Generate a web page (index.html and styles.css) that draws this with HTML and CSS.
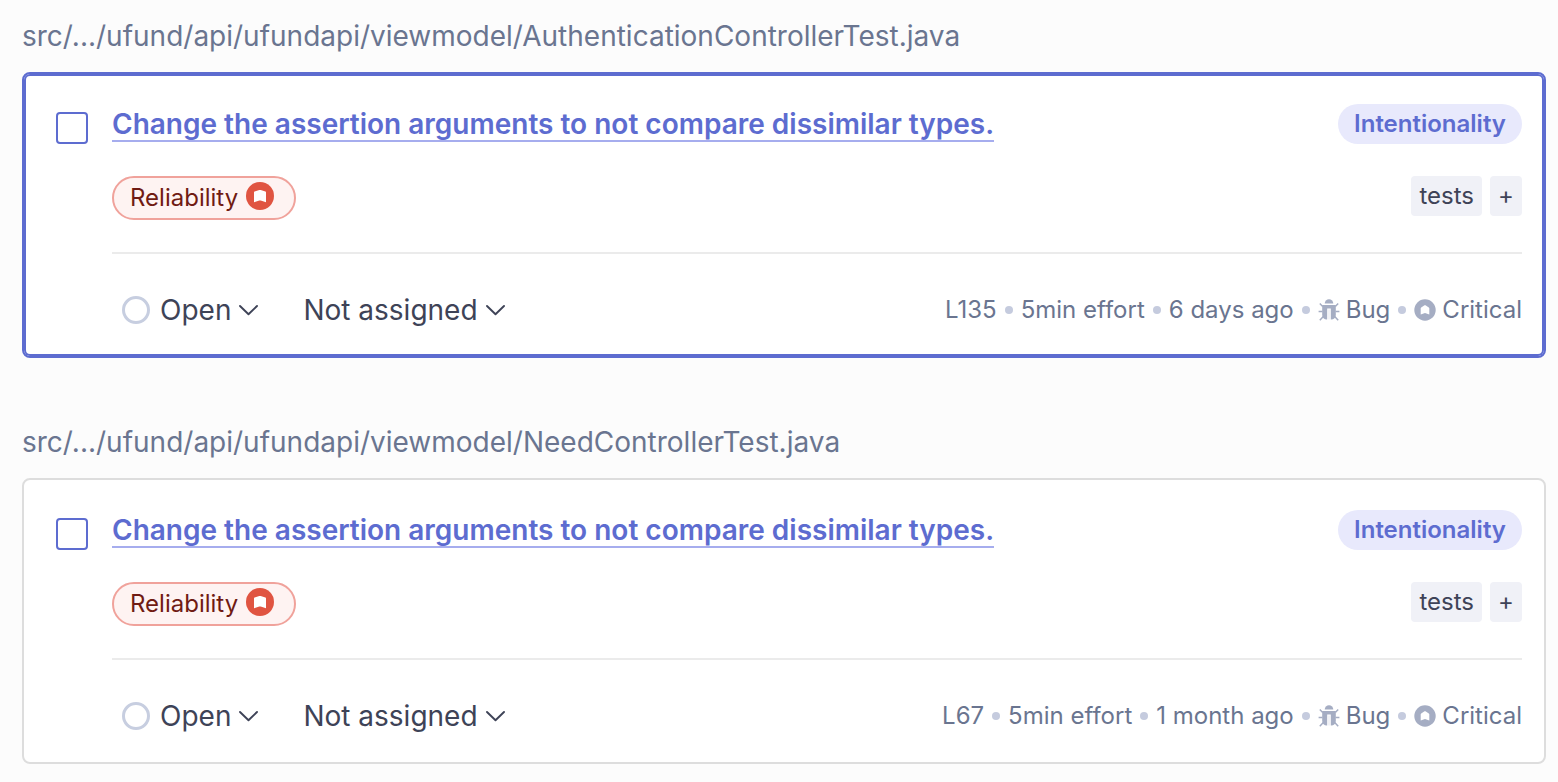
FILE: index.html
```html
<!DOCTYPE html>
<html lang="en">
<head>
<meta charset="utf-8">
<title>Issues</title>
<link rel="stylesheet" href="styles.css">
</head>
<body>
<svg class="sprite" aria-hidden="true">
  <symbol id="chevron" viewBox="0 0 20 12"><path d="M1 2 9.500 10.300 18 2" fill="none" stroke="currentColor" stroke-width="1.900" stroke-linecap="round" stroke-linejoin="round"/></symbol>
  <symbol id="ring" viewBox="0 0 28 28"><circle cx="14" cy="14" r="12.500" fill="none" stroke="currentColor" stroke-width="3"/></symbol>
  <symbol id="severity" viewBox="0 0 28 28"><circle cx="14" cy="14" r="14" fill="currentColor"/><path d="M8 10.400q0-.6.6-.9L13.300 8q.7-.2 1.400 0L19.400 9.500q.6.300.6.900V20.300L14.700 18.600q-.7-.2-1.400 0L8 20.300z" fill="#fff"/></symbol>
  <symbol id="critical" viewBox="0 0 22 22"><circle cx="11" cy="11" r="10.700" fill="currentColor"/><path d="M6.700 9.300q0-.6.500-.9L10.500 6.300q.5-.3 1 0l3.300 2.100q.5.300.5.900v6.200l-3.600-1.300q-.7-.2-1.400 0L6.700 15.500z" fill="#fff"/></symbol>
  <symbol id="bug" viewBox="0 0 22 22"><path d="M6.700 4.500a4.300 4.300 0 0 1 8.600 0z" fill="currentColor"/><path d="M4.200 6h13.600v10a4.500 4.500 0 0 1-4.500 4.500h-.5V9.500H9.200v11h-.5A4.500 4.500 0 0 1 4.200 16z" fill="currentColor"/><path d="M10.400 10.500h1.200v10h-1.200z" fill="currentColor" opacity=".25"/><path d="M4.700 7.500 1.800 4.500M17.300 7.500l2.900-3M4.500 12.500H.6M17.500 12.500h3.900M5.300 17.500l-3.500 3.700M16.700 17.500l3.500 3.700" stroke="currentColor" stroke-width="1.500" fill="none"/></symbol>
</svg>
<main class="issues">
  <section class="group">
    <h2 class="path">src/.../ufund/api/ufundapi/viewmodel/AuthenticationControllerTest.java</h2>
    <article class="card card-selected">
      <input class="check" type="checkbox" aria-label="Select issue on line 135">
      <div class="content">
        <div class="row">
          <a class="title" href="#">Change the assertion arguments to not compare dissimilar types.</a>
          <span class="attribute">Intentionality</span>
        </div>
        <div class="row row-tags">
          <span class="quality">Reliability <svg class="quality-icon" aria-hidden="true"><use href="#severity"/></svg></span>
          <div class="tags"><span class="tag">tests</span><button class="tag tag-add" type="button" aria-label="Edit tags">+</button></div>
        </div>
        <div class="row row-footer">
          <div class="actions">
            <button class="action" type="button"><svg class="ring" aria-hidden="true"><use href="#ring"/></svg>Open<svg class="chevron" aria-hidden="true"><use href="#chevron"/></svg></button>
            <button class="action" type="button">Not assigned<svg class="chevron" aria-hidden="true"><use href="#chevron"/></svg></button>
          </div>
          <ul class="meta">
            <li>L135</li>
            <li>5min effort</li>
            <li>6 days ago</li>
            <li><svg class="meta-icon" aria-hidden="true"><use href="#bug"/></svg>Bug</li>
            <li><svg class="meta-icon" aria-hidden="true"><use href="#critical"/></svg>Critical</li>
          </ul>
        </div>
      </div>
    </article>
  </section>
  <section class="group">
    <h2 class="path">src/.../ufund/api/ufundapi/viewmodel/NeedControllerTest.java</h2>
    <article class="card">
      <input class="check" type="checkbox" aria-label="Select issue on line 67">
      <div class="content">
        <div class="row">
          <a class="title" href="#">Change the assertion arguments to not compare dissimilar types.</a>
          <span class="attribute">Intentionality</span>
        </div>
        <div class="row row-tags">
          <span class="quality">Reliability <svg class="quality-icon" aria-hidden="true"><use href="#severity"/></svg></span>
          <div class="tags"><span class="tag">tests</span><button class="tag tag-add" type="button" aria-label="Edit tags">+</button></div>
        </div>
        <div class="row row-footer">
          <div class="actions">
            <button class="action" type="button"><svg class="ring" aria-hidden="true"><use href="#ring"/></svg>Open<svg class="chevron" aria-hidden="true"><use href="#chevron"/></svg></button>
            <button class="action" type="button">Not assigned<svg class="chevron" aria-hidden="true"><use href="#chevron"/></svg></button>
          </div>
          <ul class="meta">
            <li>L67</li>
            <li>5min effort</li>
            <li>1 month ago</li>
            <li><svg class="meta-icon" aria-hidden="true"><use href="#bug"/></svg>Bug</li>
            <li><svg class="meta-icon" aria-hidden="true"><use href="#critical"/></svg>Critical</li>
          </ul>
        </div>
      </div>
    </article>
  </section>
</main>
</body>
</html>
```
FILE: styles.css
```css
* {
  box-sizing: border-box;
}

body {
  margin: 0;
  background: #fcfcfc;
  color: #3e4357;
  font-family: Inter, "Liberation Sans", sans-serif;
  font-size: 24px;
}

button {
  border: 0;
  background: none;
  color: inherit;
  font: inherit;
  cursor: pointer;
}

svg {
  flex: none;
}

.sprite {
  display: none;
}

.issues {
  display: flex;
  flex-direction: column;
  gap: 64px;
  padding: 16px 12px 16px 22px;
}

.path {
  margin: 0 0 16px;
  color: #6a7590;
  font-size: 28px;
  font-weight: 400;
  line-height: 40px;
}

.card {
  display: flex;
  gap: 24px;
  padding: 30px 22px 22px 32px;
  border: 2px solid #dddddd;
  border-radius: 8px;
  background: #fff;
}

.card-selected {
  border-color: #5d6cd0;
  box-shadow: inset 0 0 0 2px #5d6cd0;
}

.check {
  appearance: none;
  flex: none;
  width: 32px;
  height: 32px;
  margin: 8px 0 0;
  border: 2px solid #5d6cd0;
  border-radius: 4px;
  background: #fff;
}

.check:checked {
  background: #5d6cd0;
}

.content {
  flex: 1;
  min-width: 0;
}

.row {
  display: flex;
  align-items: center;
  justify-content: space-between;
  gap: 16px;
}

.title {
  border-bottom: 2px solid #a6adee;
  margin-top: 2px;
  color: #5d6cd0;
  font-size: 28px;
  font-weight: 600;
  line-height: 32px;
  text-decoration: none;
}

.attribute {
  padding: 0 16px;
  border-radius: 20px;
  background: #e8e9fc;
  color: #5d6cd0;
  font-weight: 600;
  line-height: 40px;
}

.row-tags {
  align-items: flex-start;
  margin-top: 32px;
  padding-bottom: 32px;
  border-bottom: 2px solid #ebebeb;
}

.quality {
  display: flex;
  align-items: flex-start;
  gap: 8px;
  padding: 0 20px 0 16px;
  border: 2px solid #f0a29b;
  border-radius: 22px;
  background: #fef3f2;
  color: #701b13;
  line-height: 40px;
}

.quality-icon {
  width: 28px;
  height: 28px;
  margin-top: 4px;
  color: #e05441;
}

.tags {
  display: flex;
  gap: 8px;
}

.tag {
  padding: 0 8px;
  border-radius: 4px;
  background: #f0f1f7;
  line-height: 40px;
}

.tag-add {
  width: 32px;
}

.row-footer {
  min-height: 48px;
  margin-top: 32px;
}

.actions {
  display: flex;
  gap: 24px;
  padding-left: 10px;
}

.action {
  display: flex;
  align-items: center;
  padding: 0;
  font-size: 28px;
  line-height: 48px;
}

.action + .action {
  padding-left: 20px;
}

.ring {
  width: 28px;
  height: 28px;
  margin-right: 10px;
  color: #c7cee0;
}

.chevron {
  width: 20px;
  height: 12px;
  margin-left: 8px;
}

.meta {
  display: flex;
  margin: 0;
  padding: 0;
  color: #6a7590;
  line-height: 48px;
  list-style: none;
}

.meta li {
  display: flex;
  align-items: center;
}

.meta li + li::before {
  content: "";
  width: 8px;
  height: 8px;
  margin: 0 8px;
  border-radius: 50%;
  background: #c5cbde;
}

.meta-icon {
  width: 22px;
  height: 22px;
  margin-right: 6px;
  color: #a5adc3;
}
```
